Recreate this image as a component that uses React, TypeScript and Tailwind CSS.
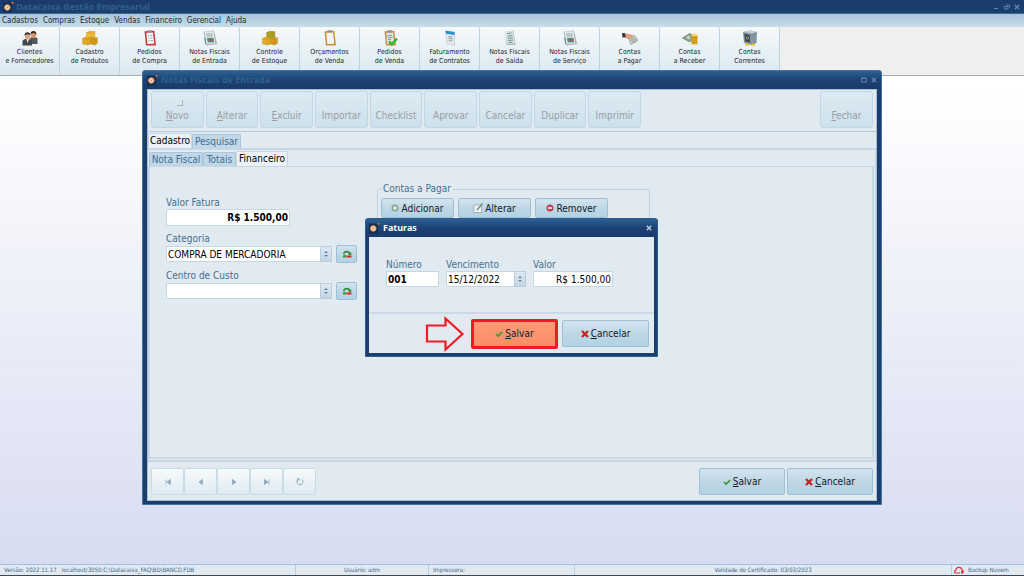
import React from "react";

type IconName =
  | "people" | "boxes" | "clipRed" | "sheet" | "boxesGreen" | "clip" | "clipCheck"
  | "contract" | "paper" | "pay" | "receive" | "safe";

const shortcuts: { icon: IconName; a: string; b: string }[] = [
  { icon: "people", a: "Clientes", b: "e Fornecedores" },
  { icon: "boxes", a: "Cadastro", b: "de Produtos" },
  { icon: "clipRed", a: "Pedidos", b: "de Compra" },
  { icon: "sheet", a: "Notas Fiscais", b: "de Entrada" },
  { icon: "boxesGreen", a: "Controle", b: "de Estoque" },
  { icon: "clip", a: "Orçamentos", b: "de Venda" },
  { icon: "clipCheck", a: "Pedidos", b: "de Venda" },
  { icon: "contract", a: "Faturamento", b: "de Contratos" },
  { icon: "paper", a: "Notas Fiscais", b: "de Saída" },
  { icon: "sheet", a: "Notas Fiscais", b: "de Serviço" },
  { icon: "pay", a: "Contas", b: "a Pagar" },
  { icon: "receive", a: "Contas", b: "a Receber" },
  { icon: "safe", a: "Contas", b: "Correntes" },
];

function Boxes({ top }: { top: string }) {
  return (
    <g stroke="#a87a14" strokeWidth=".3">
      <path d="M4.500 2.500 8 1l5 .5v5.500l-3 1.500-5.500-.6z" fill={top} />
      <path d="m4.500 2.500 5.500.7v5M10 3.200l3-1.700" fill="none" />
      <path d="M.5 8.500 3.500 7l5.500.5v6L6 15l-5.500-1z" fill="#e5aa22" />
      <path d="m.5 8.500 5.500.8V15M6 9.300l3-1.800" fill="none" />
      <path d="M8.500 9 11 7.500l4.500.3v5.500L13 15l-4.500-.8z" fill="#d99a1c" />
      <path d="m8.500 9 4.500.6V15M13 9.600l2.500-1.800" fill="none" />
    </g>
  );
}

function Clip({ frame, page }: { frame: string; page: string }) {
  return (
    <g>
      <path d="M2.500 1.200 12.300.7 14 15.500H4z" fill={frame} />
      <path d="M4.300 2.800l6.700-.3 1.300 11.300-7 .2z" fill={page} />
      <path d="M5.500.3h4.500v2.200H5.500z" fill="#8d8f93" />
    </g>
  );
}

function AppIcon({ name }: { name: IconName }) {
  return (
    <svg viewBox="0 0 16 16" className="h-4 w-4" aria-hidden="true">
      {name === "people" && (
        <g>
          <path d="M8 8c2-1.500 6-1.500 7.500.5V14H9z" fill="#55565a" />
          <ellipse cx="11.500" cy="4.500" rx="2.800" ry="3.500" fill="#d99a72" />
          <path d="M8.500 4C8.500 0 14.500 0 14.500 4.500L12 3z" fill="#3b2a22" />
          <path d="M.5 11c1.500-3 7.500-3 9.500 0v4.500H.5z" fill="#47484c" />
          <path d="m4.500 9 1 4 1.500-4z" fill="#f3f3f3" />
          <ellipse cx="5.500" cy="6" rx="2.600" ry="3.300" fill="#dca27b" />
          <path d="M2.500 5.500C2.500 1 8.500 1 8.500 5.500L6 4z" fill="#33302f" />
        </g>
      )}
      {name === "boxes" && <Boxes top="#efbd37" />}
      {name === "boxesGreen" && <Boxes top="#a8a12a" />}
      {name === "clipRed" && (
        <g>
          <Clip frame="#c8323d" page="#f8f4f4" />
          <path d="M6 5.500h1M6 8h1M6.500 10.500h1M8 5.500h2.500M8 8h2.500M8.500 10.500H11" stroke="#9b9da5" strokeWidth=".8" />
        </g>
      )}
      {name === "sheet" && (
        <g>
          <path d="m1.500 1.500 10.500-1L15 14l-11 1.500z" fill="#a8b0b4" />
          <path d="m2.500 1.500 9-.3L13.300 13.200l-8.800.8z" fill="#e4ecef" />
          <path d="M4 4h6.500M4.300 6h6.500" stroke="#8fa5ae" />
          <path d="m5 8 6.500-.3.700 4.500-6.500.3z" fill="#4a8f7c" />
          <path d="m6.500 11 2-1 3 .5" stroke="#d5574e" fill="none" />
          <path d="M2.700 7.500 3.700 14" stroke="#5b7fa8" />
        </g>
      )}
      {name === "clip" && <Clip frame="#c9912f" page="#f1f5f8" />}
      {name === "clipCheck" && (
        <g>
          <Clip frame="#c09245" page="#dfe4e8" />
          <path d="M5.500 5.500h4.500M6 7.500h4.500M6 9.500h3" stroke="#8d99a4" />
          <path d="m7 11.500 2.800 2.800L15 8.500" fill="none" stroke="#36b529" strokeWidth="2.500" />
        </g>
      )}
      {name === "contract" && (
        <g>
          <path d="m3.500.8 9 1.200v13.300L5 13.500z" fill="#e3ebf1" stroke="#a8b7c3" strokeWidth=".5" />
          <path d="m3.500.8 9 1.200v3L4 3.800z" fill="#2591d6" />
          <path d="m6.500 6.500 4 .6M6.500 8.500l4 .6M6.800 10.500l3.700.6" stroke="#8d9aa5" />
        </g>
      )}
      {name === "paper" && (
        <g>
          <path d="m3.500 1.500 8-1L13.500 15H4.500z" fill="#a9b9bb" />
          <path d="m3.500 1.500 7.500-.5 1.500 12.500-7.500.5z" fill="#dbe6e6" />
          <path d="M5 3.500 9.500 3M5.500 6l5-.3M5.800 8.200l5-.3M6 10.400l5-.3M6.500 12.500l4-.3" stroke="#5c898b" strokeWidth=".9" />
        </g>
      )}
      {name === "pay" && (
        <g>
          <path d="m6.500 8 6-2.500 3.500 5-7 4z" fill="#cfd9ce" stroke="#788a7b" strokeWidth=".7" />
          <circle cx="11.500" cy="10" r="1.700" fill="none" stroke="#82958a" />
          <path d="m1 4 3-.5 7 1.200-1 2 2 1.500-4 1L3 8z" fill="#dca07c" />
          <path d="m0 3 3 .3.700 4L.5 7.500z" fill="#343338" />
        </g>
      )}
      {name === "receive" && (
        <g>
          <path d="m.5 8 7-4.500 6.500 3.500-6.500 5z" fill="#8fa489" stroke="#5c7560" strokeWidth=".6" />
          <circle cx="6.500" cy="7.500" r="1.800" fill="#c4d1bf" />
          <path d="M9.500 5h6v9.500h-6z" fill="#e3ad26" />
          <path d="M9.500 7.500h6M9.500 10h6M9.500 12.500h6" stroke="#a97818" strokeWidth=".7" />
          <ellipse cx="12.500" cy="5" rx="3" ry="1.300" fill="#f8d968" />
        </g>
      )}
      {name === "safe" && (
        <g>
          <path d="m1 2 7-1.500L15 2l-.5 11L9 15l-7-2z" fill="#8494a0" />
          <path d="m1 2 7-1.500L15 2 9.500 3.500z" fill="#c3d0d6" />
          <path d="m2.500 3.800 5.500 1.200v7.800l-5-1.500z" fill="#3d464e" />
          <circle cx="5.500" cy="8" r="1.300" fill="none" stroke="#aab8c0" strokeWidth=".7" />
          <path d="M3.500 13h3.500V15.500H3.500zM9.500 13.500h3.500v2H9.500z" fill="#eab32b" />
        </g>
      )}
    </svg>
  );
}

function Logo() {
  return (
    <svg viewBox="0 0 12 12" className="h-3 w-3 shrink-0" aria-hidden="true">
      <path d="M1 1.500h9v10H1z" fill="#12304f" />
      <circle cx="5.300" cy="6.500" r="2.800" fill="#fbd9bd" stroke="#e58a52" />
      <path d="m4.500 7.300 1.600-1.600" stroke="#d7622a" />
      <circle cx="10.500" cy="1.800" r="1.100" fill="#e56a2f" />
    </svg>
  );
}

function Check() {
  return (
    <svg viewBox="0 0 9 8" className="h-2 w-2 shrink-0" aria-hidden="true">
      <path d="M1 4 3.500 6.300 8 1.800" fill="none" stroke="#3d9a35" strokeWidth="1.900" />
    </svg>
  );
}

function Cross() {
  return (
    <svg viewBox="0 0 8 8" className="h-2 w-2 shrink-0" aria-hidden="true">
      <path d="m1 1 6 6M7 1 1 7" stroke="#c9211b" strokeWidth="2.300" />
    </svg>
  );
}

function CloseGlyph() {
  return (
    <svg viewBox="0 0 6 6" className="h-1.5 w-1.5" aria-hidden="true">
      <path d="m.8.8 4.400 4.400M5.200.8.8 5.200" stroke="currentColor" strokeWidth="1.300" />
    </svg>
  );
}

function Stepper() {
  return (
    <span className="pointer-events-none absolute inset-y-0 right-0 flex w-3 items-center justify-center border border-[#b9cfdf] bg-linear-to-b from-[#dfe9f1] to-[#c3d6e4]">
      <svg viewBox="0 0 4 6" className="h-1.5 w-1" aria-hidden="true">
        <path d="m0 2 2-2 2 2zM0 4l2 2 2-2z" fill="#5b86a8" />
      </svg>
    </span>
  );
}

const actionBase =
  "flex items-center justify-center gap-0.5 rounded-[2px] text-[10px] text-[#10202c]";
const blueFace = "border border-[#9dc0d6] bg-linear-to-b from-[#d3e4ee] via-[#bfd7e5] to-[#b2d2e4]";

function Action({ kind, className }: { kind: "save" | "cancel"; className: string }) {
  return (
    <button type="button" className={`${actionBase} ${className}`}>
      {kind === "save" ? <Check /> : <Cross />}
      <span>
        <u>{kind === "save" ? "S" : "C"}</u>
        {kind === "save" ? "alvar" : "ancelar"}
      </span>
    </button>
  );
}

function ToolButton({ label, accel }: { label: string; accel?: boolean }) {
  return (
    <button
      type="button"
      disabled
      className="relative flex h-[37px] min-w-0 flex-1 items-end justify-center rounded-[3px] border border-[#bfd8e6] bg-linear-to-b from-[#deebf2] to-[#cce0ec] pb-[5px] text-[10px] leading-3 text-[#9a9ea1]"
    >
      {label === "Novo" && <span className="absolute top-2 right-5 h-1.5 w-1.5 border-r border-b border-[#b0b4b6]" />}
      <span>
        {accel ? <u>{label[0]}</u> : label[0]}
        {label.slice(1)}
      </span>
    </button>
  );
}

const fieldBox = "h-4 w-full border border-[#c3d7e5] bg-white px-px text-[10px] text-black outline-none";
const labelText = "block text-[10px] leading-3 text-[#45708f]";

function LookupRow({ id, label, value }: { id: string; label: string; value: string }) {
  return (
    <div>
      <label htmlFor={id} className={labelText}>{label}</label>
      <div className="flex items-center gap-1">
        <div className="relative w-[167px]">
          <select id={id} defaultValue={value} className={`${fieldBox} block appearance-none`}>
            <option value={value}>{value}</option>
          </select>
          <Stepper />
        </div>
        <button type="button" aria-label={`Cadastrar ${label}`} className={`flex h-[18px] w-[21px] items-center justify-center rounded-[2px] ${blueFace}`}>
          <svg viewBox="0 0 10 8" className="h-2 w-2.5" aria-hidden="true">
            <path d="M1 4C1.500 0 7 0 8.500 3L9.500 2.500 9 5.500 6 4.500 7 4C6 2 3 2 2.500 4z" fill="#2d8a35" />
            <path d="M1 7.500V5.500l1.500-1 1.500 1v2z" fill="#3a9a40" />
            <path d="M4.500 5.500H9.500v2H4.500z" fill="#d32b25" />
          </svg>
        </button>
      </div>
    </div>
  );
}

const navPaths = [
  "M2 1.500v5M6.500 1.500 3 4l3.500 2.500z",
  "M5.500 1.500 2 4l3.500 2.500z",
  "M2.500 1.500 6 4 2.500 6.500z",
  "M6 1.500v5M1.500 1.500 5 4 1.500 6.500z",
];
const navNames = ["Primeiro", "Anterior", "Próximo", "Último", "Atualizar"];

function NavBar() {
  return (
    <div className="flex">
      {navNames.map((n, i) => (
        <button key={n} type="button" aria-label={n} className="flex h-[27px] w-[33px] items-center justify-center rounded-[2px] border border-[#c6dde9] bg-linear-to-b from-[#f7fafb] to-[#deebf1]">
          <svg viewBox="0 0 8 8" className="h-2 w-2" aria-hidden="true">
            {i < 4 ? (
              <path d={navPaths[i]} fill="#90a8bc" stroke="#90a8bc" strokeWidth=".8" />
            ) : (
              <path d="M1 .8h2v2M2.800 1A3 3 0 1 0 5.500 1.200" fill="none" stroke="#8299ad" strokeWidth=".9" />
            )}
          </svg>
        </button>
      ))}
    </div>
  );
}

const titleFace = "bg-linear-to-b from-[#2c6195] via-[#1d4273] to-[#1a3a6b]";
const titleText = "flex-1 font-['Noto_Sans',sans-serif] text-[9px] leading-3 font-bold";
const tabOn = "h-[15px] rounded-t-[2px] border border-b-0 border-[#c3d7e5] bg-[#edf2f7] text-[10px] leading-3 text-black";
const tabOff = "h-[14px] rounded-t-[2px] border border-b-0 border-[#aac7db] bg-[#c2d7e5] text-[10px] leading-3 text-[#3d6f94]";

function MainWindow() {
  return (
    <section className="absolute top-[70px] left-[142px] flex h-[435px] w-[740px] flex-col overflow-hidden rounded-t-[3px] border border-[#47719e] bg-[#1a3f6d]">
      <header className={`flex h-[18px] shrink-0 items-center gap-[3px] pr-1 pl-[3px] text-[#2f608c] ${titleFace}`}>
        <Logo />
        <h2 className={titleText}>Notas Fiscais de Entrada</h2>
        <button type="button" aria-label="Maximizar" className="mr-px text-[#5b84a8]">
          <svg viewBox="0 0 6 6" className="h-1.5 w-1.5" aria-hidden="true"><path d="M.5 1.500h5v3.500h-5zM.5 1h5" fill="none" stroke="currentColor" /></svg>
        </button>
        <button type="button" aria-label="Fechar janela" className="text-[#5b84a8]"><CloseGlyph /></button>
      </header>
      <div className="mx-1 mb-[3px] flex flex-1 flex-col border border-[#a9bdd4] bg-[#e1e9f1]">
        <div className="flex justify-between border-b border-[#b4cbdd] px-[3px] pt-px pb-[3px]">
          <div className="flex w-[490px] gap-0.5">
            <ToolButton label="Novo" accel />
            <ToolButton label="Alterar" accel />
            <ToolButton label="Excluir" accel />
            <ToolButton label="Importar" />
            <ToolButton label="Checklist" />
            <ToolButton label="Aprovar" />
            <ToolButton label="Cancelar" />
            <ToolButton label="Duplicar" />
            <ToolButton label="Imprimir" />
          </div>
          <div className="flex w-[53px]">
            <ToolButton label="Fechar" accel />
          </div>
        </div>
        <div role="tablist" className="flex h-4 items-end">
          <button type="button" role="tab" aria-selected="true" className={`w-[44px] ${tabOn}`}>Cadastro</button>
          <button type="button" role="tab" aria-selected="false" className={`w-[49px] ${tabOff}`}>Pesquisar</button>
        </div>
        <div className="flex flex-1 flex-col border-t-2 border-r border-b-2 border-[#c6d8e6] pr-px pb-px">
          <div role="tablist" className="flex h-4 items-end pl-px">
            <button type="button" role="tab" aria-selected="false" className={`w-[54px] ${tabOff}`}>Nota Fiscal</button>
            <button type="button" role="tab" aria-selected="false" className={`w-[33px] ${tabOff}`}>Totais</button>
            <button type="button" role="tab" aria-selected="true" className={`w-[52px] ${tabOn}`}>Financeiro</button>
          </div>
          <div className="flex flex-1 items-start gap-5 border-x-2 border-t border-b-2 border-[#c6d8e6] pt-4 pl-4">
            <div className="flex w-[191px] flex-col gap-[7px] pt-3.5">
              <div>
                <label htmlFor="fatura" className={labelText}>Valor Fatura</label>
                <input id="fatura" readOnly defaultValue="R$ 1.500,00" className="block h-[17px] w-[124px] border border-[#c3d7e5] bg-white px-px text-right text-[10px] font-bold text-black outline-none" />
              </div>
              <LookupRow id="categoria" label="Categoria" value="COMPRA DE MERCADORIA" />
              <LookupRow id="centro" label="Centro de Custo" value="" />
            </div>
            <fieldset className="h-[120px] w-[273px] rounded-[2px] border border-[#bfd3e2] px-[3px]">
              <legend className="px-0.5 text-[10px] leading-3 text-[#45708f]">Contas a Pagar</legend>
              <div className="flex gap-1 pt-[3px]">
                <button type="button" className={`${actionBase} ${blueFace} h-5 w-[73px]`}>
                  <svg viewBox="0 0 8 8" className="h-2 w-2" aria-hidden="true"><circle cx="4" cy="4" r="3.500" fill="#8aa68e" /><path d="M4 2v4M2 4h4" stroke="#fff" strokeWidth="1.200" /></svg>
                  Adicionar
                </button>
                <button type="button" className={`${actionBase} ${blueFace} h-5 w-[73px]`}>
                  <svg viewBox="0 0 10 10" className="h-2.5 w-2.5" aria-hidden="true"><path d="M1 2h7l1 7.500H.5z" fill="#eef2f2" stroke="#92a0a6" strokeWidth=".7" /><path d="M9.500.5 4 7" stroke="#6d8a86" strokeWidth="1.300" /></svg>
                  Alterar
                </button>
                <button type="button" className={`${actionBase} ${blueFace} h-5 w-[73px]`}>
                  <svg viewBox="0 0 8 8" className="h-2 w-2" aria-hidden="true"><circle cx="4" cy="4" r="3.500" fill="#bf3f55" /><path d="M2 4h4" stroke="#fff" strokeWidth="1.300" /></svg>
                  Remover
                </button>
              </div>
            </fieldset>
          </div>
        </div>
        <footer className="flex items-center justify-between px-[3px] pt-1.5 pb-[5px]">
          <NavBar />
          <div className="flex gap-0.5">
            <Action kind="save" className={`h-[27px] w-[86px] ${blueFace}`} />
            <Action kind="cancel" className={`h-[27px] w-[86px] ${blueFace}`} />
          </div>
        </footer>
      </div>
    </section>
  );
}

function InvoiceDialog() {
  return (
    <section role="dialog" aria-label="Faturas" className="absolute top-[218px] left-[365px] flex h-[139px] w-[293px] flex-col overflow-hidden rounded-t-[3px] border border-[#2f5c8c] bg-[#1a3f6d]">
      <header className={`flex h-[18px] shrink-0 items-center gap-[3px] pr-[5px] pl-0.5 text-white ${titleFace}`}>
        <Logo />
        <h2 className={titleText}>Faturas</h2>
        <button type="button" aria-label="Fechar Faturas" className="text-[#bdd0e2]"><CloseGlyph /></button>
      </header>
      <div className="mx-[3px] mb-[3px] flex flex-1 flex-col bg-[#e1e9f1]">
        <div className="flex flex-1 gap-[7px] border-b-2 border-[#cbdae6] pt-[22px] pl-[17px]">
          <div className="w-[53px]">
            <label htmlFor="numero" className={labelText}>Número</label>
            <input id="numero" defaultValue="001" className={`${fieldBox} block font-bold`} />
          </div>
          <div className="w-[80px]">
            <label htmlFor="venc" className={labelText}>Vencimento</label>
            <div className="relative">
              <input id="venc" defaultValue="15/12/2022" className={`${fieldBox} block`} />
              <Stepper />
            </div>
          </div>
          <div className="w-[80px]">
            <label htmlFor="valor" className={labelText}>Valor</label>
            <input id="valor" defaultValue="R$ 1.500,00" className={`${fieldBox} block text-right`} />
          </div>
        </div>
        <footer className="flex h-[39px] items-center justify-end gap-1 pr-[5px]">
          <svg viewBox="0 0 40 36" className="mr-0.5 h-9 w-10" aria-hidden="true">
            <path d="M2 9.500h18.500V2.500L37.500 18 20.500 33.500v-8H2z" fill="none" stroke="#ee1c24" strokeWidth="2.200" />
          </svg>
          <Action kind="save" className="h-[30px] w-[87px] border-3 border-[#ee1c24] bg-linear-to-b from-[#fd9a74] to-[#f98d68]" />
          <Action kind="cancel" className={`h-[27px] w-[87px] ${blueFace}`} />
        </footer>
      </div>
    </section>
  );
}

export default function App() {
  return (
    <div className="relative flex min-h-screen flex-col bg-linear-to-b from-white from-15% to-[#d6dbf0] font-['DejaVu_Sans_Condensed','Noto_Sans',sans-serif]">
      <header className="flex h-3.5 items-center gap-0.5 border-b border-[#3d6690] bg-linear-to-b from-[#1b3c6c] to-[#1a3f70] pr-1 pl-0.5 text-[#315f88]">
        <Logo />
        <h1 className={titleText}>Datacaixa Gestão Empresarial</h1>
        <div className="flex items-center gap-1 text-[#5b84a8]">
          <button type="button" aria-label="Minimizar" className="mt-1 mr-0.5 h-px w-1 bg-current" />
          <button type="button" aria-label="Restaurar">
            <svg viewBox="0 0 6 6" className="h-1.5 w-1.5" aria-hidden="true"><path d="M.5 2.500h3.500v2.500H.5zM2 1h3.500v2.500" fill="none" stroke="currentColor" /></svg>
          </button>
          <button type="button" aria-label="Fechar aplicativo"><CloseGlyph /></button>
        </div>
      </header>
      <nav className="flex h-[13px] items-center gap-[5px] bg-linear-to-b from-[#a9c6dc] to-[#c9dce8] pl-0.5 text-[8px] leading-3 text-[#1c2a35]">
        {["Cadastros", "Compras", "Estoque", "Vendas", "Financeiro", "Gerencial", "Ajuda"].map((m) => (
          <a key={m} href="#">{m}</a>
        ))}
      </nav>
      <div className="flex h-[49px] border-b border-[#a6abb0] bg-[#efefef]">
        {shortcuts.map((s, i) => (
          <button key={i} type="button" className="flex w-[60px] flex-col items-center rounded-[2px] border-r border-[#bcd3e0] bg-linear-to-b from-[#f6f9fb] to-[#dae8f0] pt-[3px] text-[7px] leading-[9px] whitespace-nowrap text-[#1d252c]">
            <AppIcon name={s.icon} />
            <span className="pt-0.5">{s.a}</span>
            <span>{s.b}</span>
          </button>
        ))}
      </div>
      <main className="flex-1">
        <MainWindow />
        <InvoiceDialog />
      </main>
      <footer className="flex h-3 items-center border-t border-b border-t-[#a3c0da] border-b-[#41464c] bg-[#e1e9f1] text-[6px] leading-[10px] text-[#3f688a]">
        <span className="flex w-[296px] gap-[5px] border-r border-[#b8cddd] pl-1"><span>Versão: 2022.11.17</span><span>localhost/3050:C:\Datacaixa_FAQ\BD\BANCO.FDB</span></span>
        <span className="w-[133px] border-r border-[#b8cddd] text-center">Usuário: adm</span>
        <span className="w-[146px] border-r border-[#b8cddd] pl-1">Impressora:</span>
        <span className="flex-1 border-r border-[#b8cddd] text-center">Validade do Certificado: 03/03/2023</span>
        <span className="flex w-[72px] items-center gap-1 pl-0.5">
          <svg viewBox="0 0 10 8" className="h-2 w-2.5" aria-hidden="true"><path d="M6 7H2C0 7 .3 4 2 4c0-3.500 5.500-3.500 6 0 1 .2 1.300 1 1.200 1.500" fill="none" stroke="#d3323a" strokeWidth="1.200" /><path d="M7 5h2.500v2.500H7z" fill="#d3323a" /></svg>
          Backup Nuvem
        </span>
      </footer>
    </div>
  );
}
